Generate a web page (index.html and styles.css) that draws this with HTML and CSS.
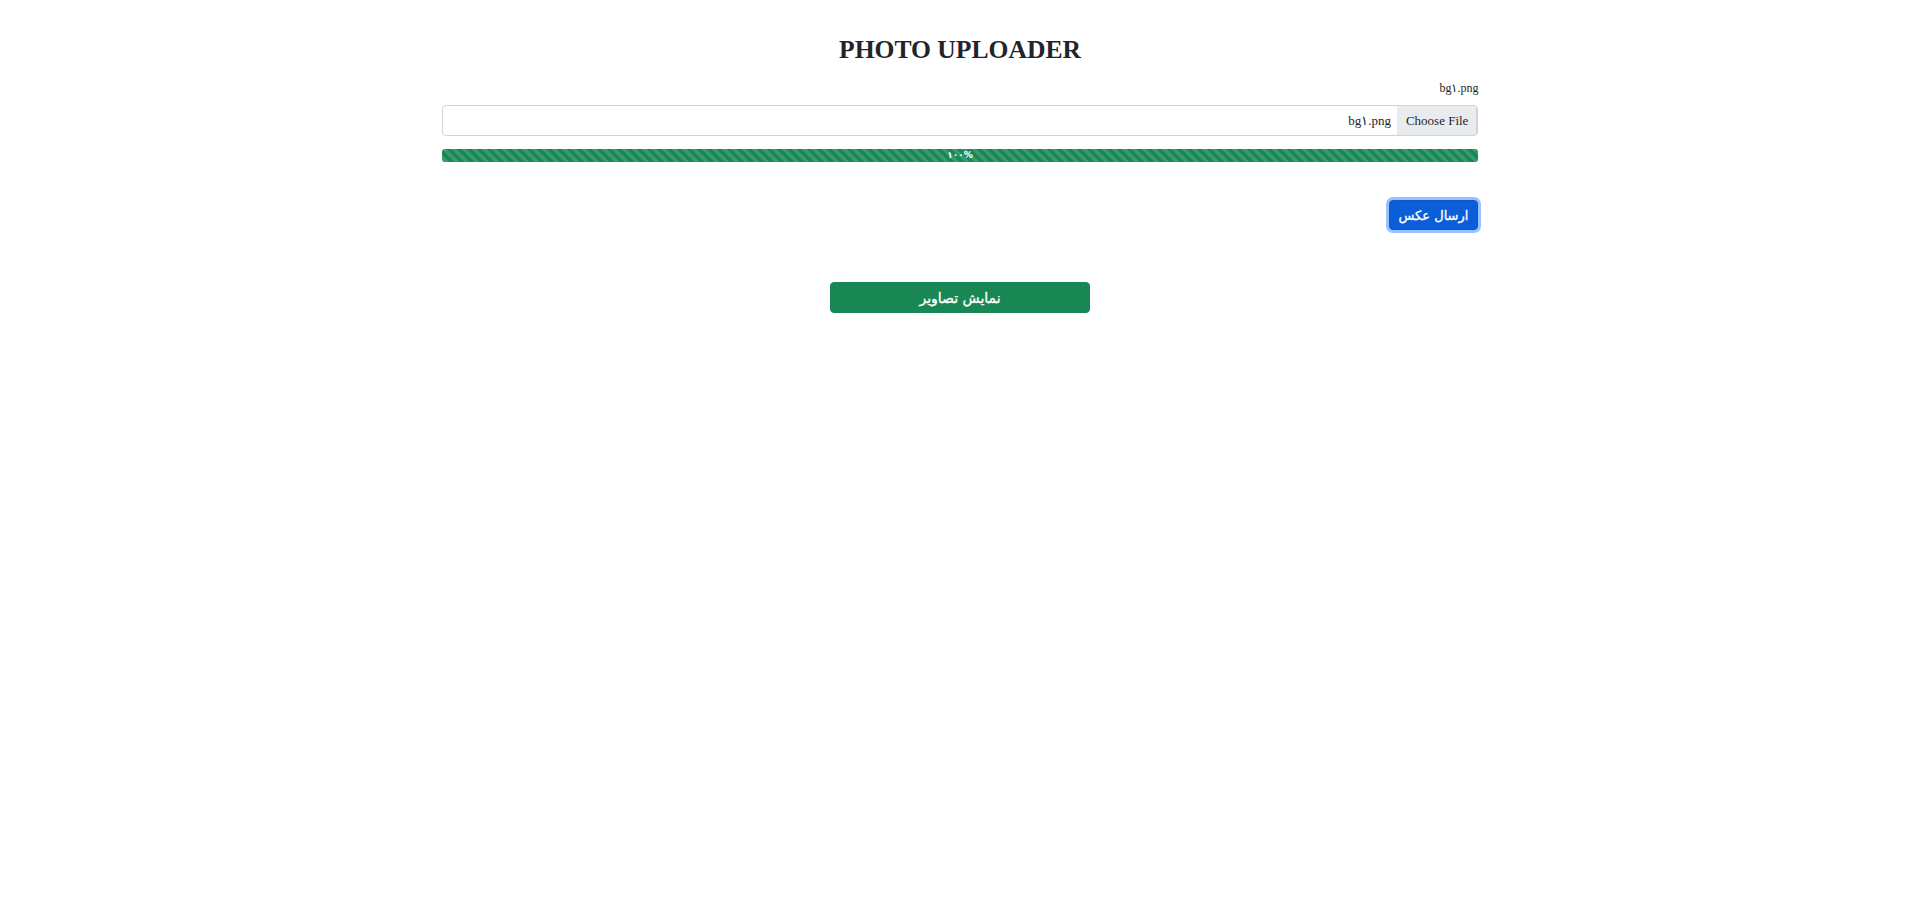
FILE: index.html
```html
<!DOCTYPE html>
<html lang="fa">
<head>
<meta charset="utf-8">
<title>Photo Uploader</title>
<link rel="stylesheet" href="styles.css">
</head>
<body>
<main class="container">
  <h1 class="title">PHOTO UPLOADER</h1>
  <form class="upload-form" dir="rtl">
    <div class="file-label"><span dir="ltr">bg۱.png</span></div>
    <div class="file-input">
      <span class="file-btn" dir="ltr">Choose File</span>
      <span class="file-name" dir="ltr">bg۱.png</span>
    </div>
    <div class="progress">
      <div class="progress-bar" style="width: 100%">۱۰۰%</div>
    </div>
    <div class="submit-row">
      <button type="button" class="btn btn-primary">ارسال عکس</button>
    </div>
  </form>
  <div class="show-row">
    <button type="button" class="btn btn-success">نمایش تصاویر</button>
  </div>
</main>
</body>
</html>
```

FILE: styles.css
```css
html, body {
  margin: 0;
  padding: 0;
  background: #fff;
}
body {
  font-family: "Liberation Serif", "Times New Roman", serif;
  color: #212529;
}
.container {
  width: 54%;
  margin: 0 auto;
}
.title {
  margin: 34px 0 0;
  font-size: 25.6px;
  line-height: 31px;
  font-weight: bold;
  text-align: center;
  color: #212529;
}
.upload-form {
  display: flex;
  flex-direction: column;
}
.file-label {
  margin-top: 14px;
  font-size: 12px;
  line-height: 18px;
  text-align: right;
}
.file-input {
  margin-top: 8px;
  height: 31px;
  box-sizing: border-box;
  border: 1px solid #ced4da;
  border-radius: 4px;
  display: flex;
  align-items: stretch;
  overflow: hidden;
  font-size: 13px;
}
.file-btn {
  display: flex;
  align-items: center;
  padding: 0 8px 0 9px;
  background: #e9ecef;
  border-right: 1px solid #ced4da;
  color: #212529;
}
.file-name {
  display: flex;
  align-items: center;
  padding: 0 6px;
}
.progress {
  margin-top: 13px;
  height: 13px;
  border-radius: 3px;
  background: #e9ecef;
  overflow: hidden;
  display: flex;
}
.progress-bar {
  background-color: #198754;
  background-image: linear-gradient(45deg, rgba(255,255,255,.15) 25%, transparent 25%, transparent 50%, rgba(255,255,255,.15) 50%, rgba(255,255,255,.15) 75%, transparent 75%, transparent);
  background-size: 10px 10px;
  color: #fff;
  font-family: "DejaVu Sans", sans-serif;
  font-size: 9px;
  font-weight: bold;
  line-height: 13px;
  text-align: center;
}
.submit-row {
  margin-top: 38px;
  display: flex;
}
.btn {
  font-family: "DejaVu Sans", "Noto Sans", sans-serif;
  font-size: 13px;
  font-weight: normal;
  border: 1px solid transparent;
  border-radius: 4px;
  color: #fff;
  cursor: pointer;
  -webkit-text-stroke: 0.3px #fff;
}
.btn-primary {
  height: 30px;
  padding: 0 9px;
  background: #0b5ed7;
  border-color: #0a58ca;
  box-shadow: 0 0 0 3px rgba(49,132,253,.5);
}
.show-row {
  margin-top: 52px;
  display: flex;
  justify-content: center;
}
.btn-success {
  width: 25%;
  height: 31px;
  font-size: 14px;
  background: #198754;
  border-color: #198754;
}
```
